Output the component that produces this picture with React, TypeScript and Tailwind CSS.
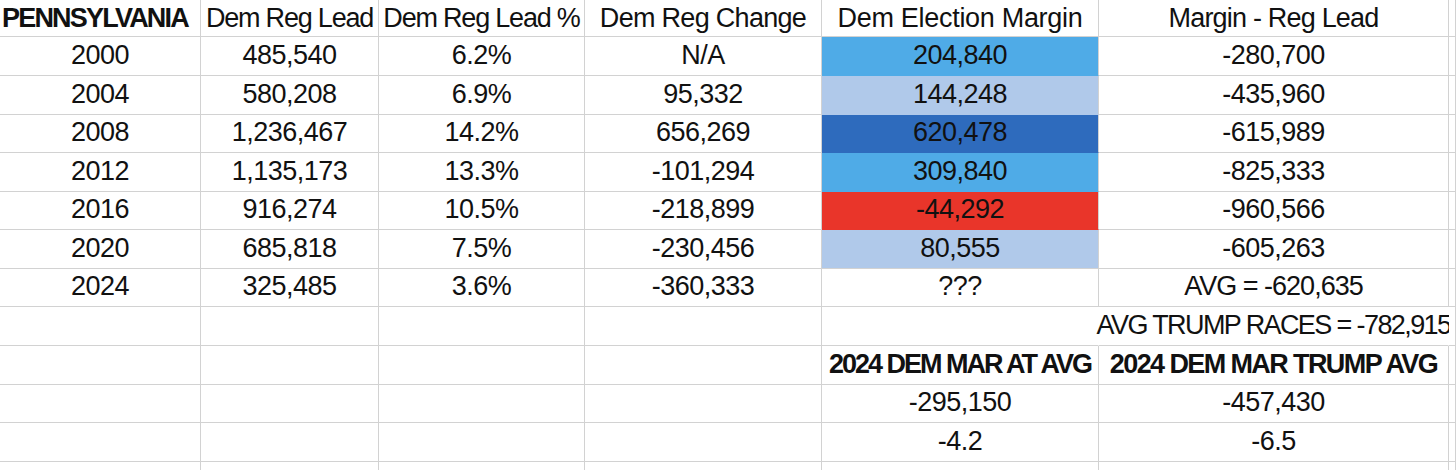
import React from "react";

type Cell = {
  text?: string;
  bold?: boolean;
  left?: boolean;
  fill?: string;
  track?: string;
  noRight?: boolean;
  spill?: boolean;
};

const colWidths = "grid-cols-[201px_178px_206px_237px_277px_350px_1fr]";

const rowHeights = [37, 39, 39, 38, 39, 38, 39, 38, 39, 39, 38, 39, 20];

const bright = "bg-[#4fabe7]";
const light = "bg-[#b0c9ea]";
const dark = "bg-[#2e6bbd]";
const red = "bg-[#e9352a]";

const header: Cell[] = [
  { text: "PENNSYLVANIA", bold: true, left: true, track: "tracking-[-1.8px]" },
  { text: "Dem Reg Lead", track: "tracking-[-1.2px]" },
  { text: "Dem Reg Lead %", track: "tracking-[-1.2px]" },
  { text: "Dem Reg Change", track: "tracking-[-0.7px]" },
  { text: "Dem Election Margin", track: "tracking-[-0.3px]" },
  { text: "Margin - Reg Lead", track: "tracking-[-0.8px]" },
  {},
];

const years: [string, string, string, string, string, string, string?][] = [
  ["2000", "485,540", "6.2%", "N/A", "204,840", "-280,700", bright],
  ["2004", "580,208", "6.9%", "95,332", "144,248", "-435,960", light],
  ["2008", "1,236,467", "14.2%", "656,269", "620,478", "-615,989", dark],
  ["2012", "1,135,173", "13.3%", "-101,294", "309,840", "-825,333", bright],
  ["2016", "916,274", "10.5%", "-218,899", "-44,292", "-960,566", red],
  ["2020", "685,818", "7.5%", "-230,456", "80,555", "-605,263", light],
  ["2024", "325,485", "3.6%", "-360,333", "???", "AVG = -620,635"],
];

function buildRows(): Cell[][] {
  const rows: Cell[][] = [header];
  years.forEach(([y, lead, pct, chg, margin, diff, fill]) => {
    rows.push([
      { text: y },
      { text: lead },
      { text: pct },
      { text: chg },
      { text: margin, fill },
      { text: diff, track: diff.startsWith("AVG") ? "tracking-[-1px]" : undefined },
      {},
    ]);
  });
  rows.push([
    {},
    {},
    {},
    {},
    { noRight: true },
    { text: "AVG TRUMP RACES = -782,915", track: "tracking-[-1.6px]", noRight: true, spill: true },
    {},
  ]);
  rows.push([
    {},
    {},
    {},
    {},
    { text: "2024 DEM MAR AT AVG", bold: true, track: "tracking-[-2px]" },
    { text: "2024 DEM MAR TRUMP AVG", bold: true, track: "tracking-[-1.6px]" },
    {},
  ]);
  rows.push([{}, {}, {}, {}, { text: "-295,150" }, { text: "-457,430" }, {}]);
  rows.push([{}, {}, {}, {}, { text: "-4.2" }, { text: "-6.5" }, {}]);
  rows.push([{}, {}, {}, {}, {}, {}, {}]);
  return rows;
}

function SheetCell({ cell, height, header, filledBelow }: { cell: Cell; height: number; header: boolean; filledBelow: boolean }) {
  const bottom = cell.fill && filledBelow ? "border-b-transparent" : "border-b-[#d2d2d2]";
  const right = cell.noRight ? "border-r-transparent" : "border-r-[#d2d2d2]";
  return (
    <div
      style={{ height }}
      className={`flex items-end border-b border-r ${bottom} ${right} ${cell.fill ?? "bg-white"} ${
        cell.left ? "justify-start pl-[2px]" : "justify-center"
      } ${header ? "pb-[4px]" : "pb-[6px]"} ${cell.spill ? "overflow-visible" : "overflow-hidden"}`}
    >
      {cell.text && (
        <span
          className={`whitespace-nowrap text-[27px] leading-none text-[#111] ${cell.bold ? "font-bold" : "font-normal"} ${
            cell.track ?? "tracking-[-0.5px]"
          }`}
        >
          {cell.text}
        </span>
      )}
    </div>
  );
}

export default function App() {
  const rows = buildRows();
  return (
    <div className="h-[470px] w-[1456px] overflow-hidden bg-white font-['Liberation_Sans',Arial,sans-serif]">
      <div className={`grid ${colWidths}`}>
        {rows.map((row, r) =>
          row.map((cell, c) => (
            <SheetCell
              key={`${r}-${c}`}
              cell={cell}
              height={rowHeights[r]}
              header={r === 0}
              filledBelow={!!rows[r + 1]?.[c]?.fill}
            />
          ))
        )}
      </div>
    </div>
  );
}
